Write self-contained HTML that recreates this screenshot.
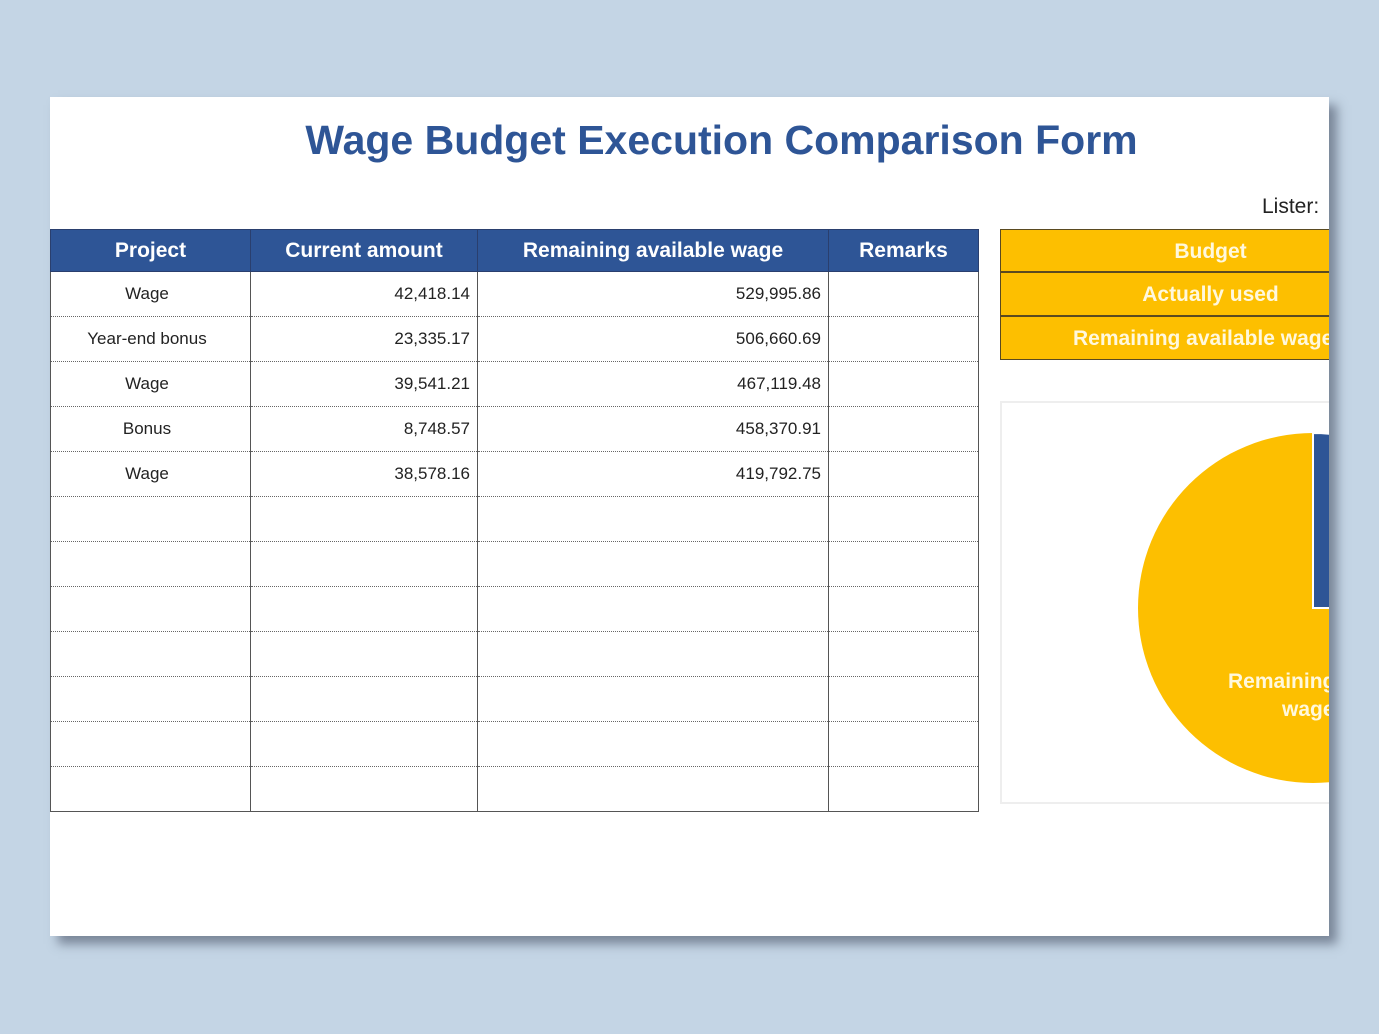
<!DOCTYPE html>
<html><head><style>
body{margin:0;width:1379px;height:1034px;background:#c4d5e5;position:relative;overflow:hidden;font-family:"Liberation Sans",sans-serif;}
.page{position:absolute;left:50px;top:97px;width:1279px;height:839px;background:#fff;box-shadow:8px 8px 10px rgba(60,70,90,.55);overflow:hidden}
.title{position:absolute;left:0;width:1343px;top:20px;text-align:center;font-size:41px;font-weight:bold;color:#2e5596;}
.lister{position:absolute;left:1212px;top:98px;font-size:21px;color:#222}
table{position:absolute;left:0;top:132px;border-collapse:collapse;font-size:17px;color:#222;table-layout:fixed}
td,th{padding:0 7px;height:44px;border-left:1px solid #555;border-bottom:1px dotted #666;overflow:hidden;white-space:nowrap}
th{background:#2e5596;color:#fff;font-size:21px;font-weight:bold;height:41px;border:1px solid #2a3f6e}
td.c{text-align:center;padding-right:14px}td.r{text-align:right}
.ob{position:absolute;left:950px;width:329px;height:44px;background:#fdbf00;border:1px solid #5a4a20;border-right:none;color:#fff8dd;font-weight:bold;font-size:21px;text-align:center;line-height:44px;white-space:nowrap;box-sizing:border-box;padding-left:80px;overflow:hidden}
.chart{position:absolute;left:950px;top:304px;width:340px;height:403px;border:2px solid #eee;box-sizing:border-box}
</style></head><body>
<div class="page">
<div class="title">Wage Budget Execution Comparison Form</div>
<div class="lister">Lister:</div>
<table>
<colgroup><col style="width:200px"><col style="width:227px"><col style="width:351px"><col style="width:150px"></colgroup>
<tr><th>Project</th><th>Current amount</th><th>Remaining available wage</th><th>Remarks</th></tr>
<tr><td class="c">Wage</td><td class="r">42,418.14</td><td class="r">529,995.86</td><td style="border-right:1px solid #555"></td></tr>
<tr><td class="c">Year-end bonus</td><td class="r">23,335.17</td><td class="r">506,660.69</td><td style="border-right:1px solid #555"></td></tr>
<tr><td class="c">Wage</td><td class="r">39,541.21</td><td class="r">467,119.48</td><td style="border-right:1px solid #555"></td></tr>
<tr><td class="c">Bonus</td><td class="r">8,748.57</td><td class="r">458,370.91</td><td style="border-right:1px solid #555"></td></tr>
<tr><td class="c">Wage</td><td class="r">38,578.16</td><td class="r">419,792.75</td><td style="border-right:1px solid #555"></td></tr>
<tr><td></td><td></td><td></td><td style="border-right:1px solid #555"></td></tr>
<tr><td></td><td></td><td></td><td style="border-right:1px solid #555"></td></tr>
<tr><td></td><td></td><td></td><td style="border-right:1px solid #555"></td></tr>
<tr><td></td><td></td><td></td><td style="border-right:1px solid #555"></td></tr>
<tr><td></td><td></td><td></td><td style="border-right:1px solid #555"></td></tr>
<tr><td></td><td></td><td></td><td style="border-right:1px solid #555"></td></tr>
<tr><td style="border-bottom:1px solid #555"></td><td style="border-bottom:1px solid #555"></td><td style="border-bottom:1px solid #555"></td><td style="border-right:1px solid #555;border-bottom:1px solid #555"></td></tr>
</table>
<div class="ob" style="top:132px;height:43px;line-height:43px;padding-left:0;width:420px">Budget</div>
<div class="ob" style="top:175px;padding-left:0;width:420px">Actually used</div>
<div class="ob" style="top:219px;padding-left:72px;text-align:left">Remaining available wage</div>
<div class="chart"></div>
<svg style="position:absolute;left:0;top:0" width="1279" height="839">
<circle cx="1263" cy="511" r="175" fill="#fdbf00"/>
<path d="M1263 511 L1263 336 A175 175 0 0 1 1438 511 Z" fill="#2e5596" stroke="#fff" stroke-width="2"/>
<text x="1178" y="591" fill="#fff8dd" font-size="21" font-weight="bold" font-family="Liberation Sans">Remaining</text>
<text x="1232" y="619" fill="#fff8dd" font-size="21" font-weight="bold" font-family="Liberation Sans">wage</text>
</svg>
</div>
</body></html>
